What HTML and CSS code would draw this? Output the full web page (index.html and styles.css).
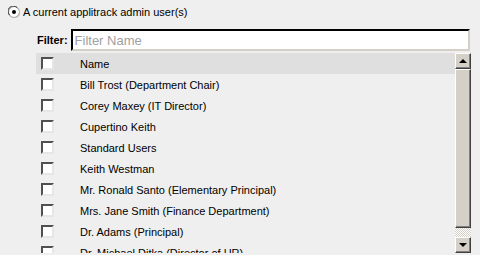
FILE: index.html
```html
<!DOCTYPE html>
<html lang="en">
<head>
<meta charset="UTF-8">
<title>Admin users</title>
<link rel="stylesheet" href="styles.css">
</head>
<body>
<div class="choice">
  <svg class="radio" width="12" height="12" viewBox="0 0 12 12">
    <circle cx="6" cy="6" r="5.5" fill="#fff" stroke="#808080"/>
    <path d="M1.5 9 A5 5 0 0 1 9 1.5" fill="none" stroke="#404040"/>
    <path d="M3 10.5 A5 5 0 0 0 10.5 3" fill="none" stroke="#d4d0c8"/>
    <circle cx="6" cy="6" r="2" fill="#000"/>
  </svg>
  <span>A current applitrack admin user(s)</span>
</div>

<div class="filter">
  <label for="filterName">Filter:</label>
  <input id="filterName" type="text" placeholder="Filter Name">
</div>

<div class="list">
  <div class="rows">
    <div class="row head"><span class="check"></span><span>Name</span></div>
    <div class="row"><span class="check"></span><span>Bill Trost (Department Chair)</span></div>
    <div class="row"><span class="check"></span><span>Corey Maxey (IT Director)</span></div>
    <div class="row"><span class="check"></span><span>Cupertino Keith</span></div>
    <div class="row"><span class="check"></span><span>Standard Users</span></div>
    <div class="row"><span class="check"></span><span>Keith Westman</span></div>
    <div class="row"><span class="check"></span><span>Mr. Ronald Santo (Elementary Principal)</span></div>
    <div class="row"><span class="check"></span><span>Mrs. Jane Smith (Finance Department)</span></div>
    <div class="row"><span class="check"></span><span>Dr. Adams (Principal)</span></div>
    <div class="row"><span class="check"></span><span>Dr. Michael Ditka (Director of HR)</span></div>
  </div>
  <div class="scrollbar">
    <div class="sb-btn"><span class="arrow up"></span></div>
    <div class="sb-thumb"></div>
    <div class="sb-track"></div>
    <div class="sb-btn"><span class="arrow down"></span></div>
  </div>
</div>
</body>
</html>
```

FILE: styles.css
```css
body {
  margin: 0;
  background-color: #efefef;
  font-family: Tahoma, "Liberation Sans", sans-serif;
  font-size: 11px;
  color: #000;
  height: 255px;
  overflow: hidden;
}

.choice {
  display: flex;
  align-items: center;
  padding: 5px 0 0 8px;
  height: 14px;
}
.choice .radio {
  margin-right: 3px;
}

.filter {
  display: flex;
  align-items: center;
  margin: 10px 10px 0 37px;
}
.filter label {
  font-weight: bold;
  margin-right: 3px;
}
.filter input {
  flex: 1;
  height: 22px;
  box-sizing: border-box;
  border: 2px inset #d4d0c8;
  border-top-color: #404040;
  border-left-color: #404040;
  padding: 0 2px;
  font-family: "Liberation Sans", sans-serif;
  font-size: 13px;
  outline: none;
}
.filter input::placeholder {
  color: #a0a0a0;
}

.list {
  display: flex;
  margin: 2px 9px 0 36px;
  height: 200px;
}
.rows {
  flex: 1;
  overflow: hidden;
}
.row {
  display: flex;
  align-items: center;
  height: 21px;
  white-space: nowrap;
}
.row.head {
  background-color: #dfdfdf;
}
.check {
  flex: none;
  width: 13px;
  height: 13px;
  box-sizing: border-box;
  background: #fff;
  border: 2px solid;
  border-color: #505050 #e6e6e6 #e6e6e6 #505050;
  margin: 0 26px 0 5px;
}

.scrollbar {
  width: 16px;
  display: flex;
  flex-direction: column;
}
.sb-btn, .sb-thumb {
  box-sizing: border-box;
  background-color: #d4d0c8;
  border: 1px solid;
  border-color: #ffffff #404040 #404040 #ffffff;
  box-shadow: inset -1px -1px #808080;
}
.sb-btn {
  height: 16px;
  display: flex;
  align-items: center;
  justify-content: center;
}
.sb-thumb {
  height: 159px;
}
.sb-track {
  flex: 1;
  background-color: #f4f4f4;
  background-image: repeating-conic-gradient(#d4d0c8 0 25%, #ffffff 0 50%);
  background-size: 2px 2px;
}
.arrow {
  width: 0;
  height: 0;
  border-left: 4px solid transparent;
  border-right: 4px solid transparent;
}
.arrow.up {
  border-bottom: 4px solid #000;
}
.arrow.down {
  border-top: 4px solid #000;
}
```
